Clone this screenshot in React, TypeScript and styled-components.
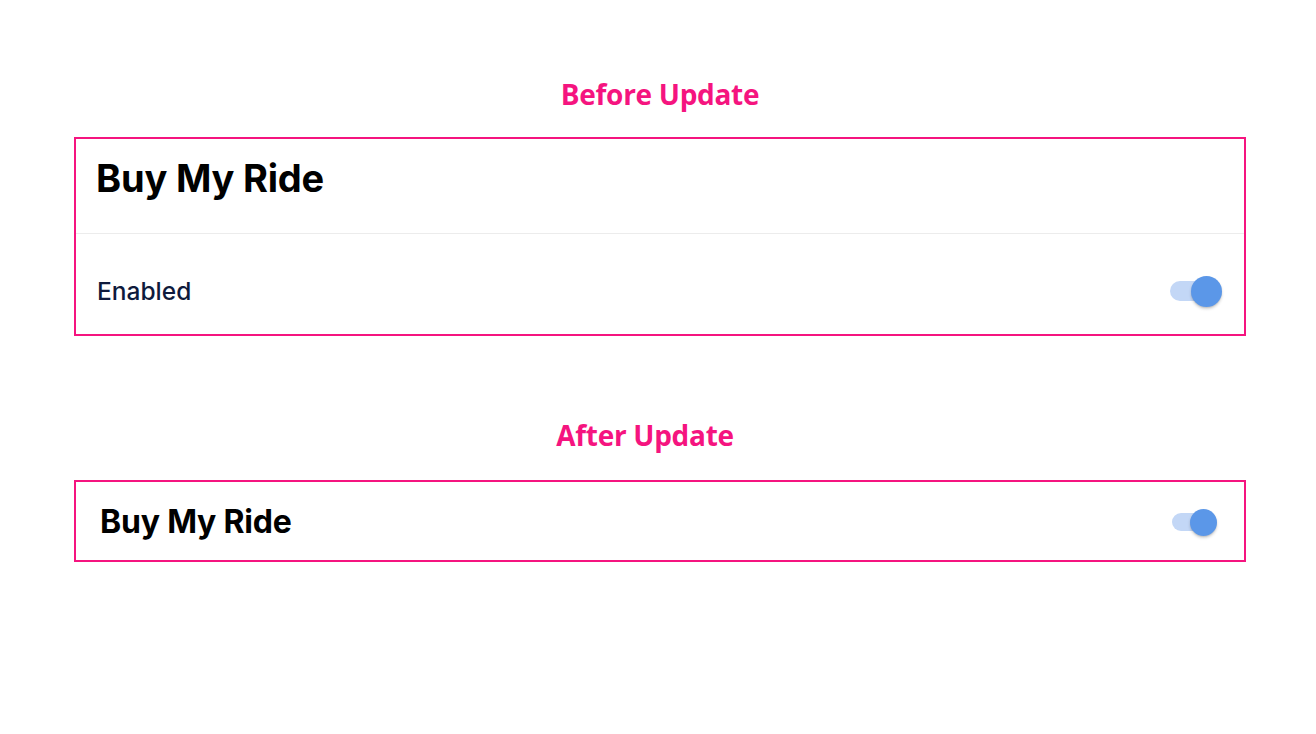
import React from "react";
import styled, { createGlobalStyle } from "styled-components";

const Global = createGlobalStyle`
  html, body { margin: 0; padding: 0; background: #ffffff; }
  body { font-family: Inter, "Noto Sans", sans-serif; }
`;

const Page = styled.div`
  width: 1316px;
  min-height: 734px;
  padding: 77px 70px 0 74px;
  box-sizing: border-box;
  display: flex;
  flex-direction: column;
`;

const Heading = styled.h2<{ $shift?: number; $gap: number }>`
  margin: 0 0 ${(p) => p.$gap}px 0;
  padding-right: ${(p) => p.$shift ?? 0}px;
  height: 34px;
  line-height: 34px;
  text-align: center;
  font-family: "Open Sans", Lato, sans-serif;
  font-weight: 700;
  font-size: 28px;
  letter-spacing: -0.3px;
  color: #f5147f;
`;

const Card = styled.section<{ $mb: number }>`
  width: 1172px;
  box-sizing: border-box;
  border: 2px solid #f5147f;
  margin-bottom: ${(p) => p.$mb}px;
  display: flex;
  flex-direction: column;
`;

const CardHeader = styled.div`
  height: 95px;
  box-sizing: border-box;
  padding: 17px 20px 0;
  display: flex;
  align-items: flex-start;
  border-bottom: 1px solid #ececec;
`;

const Title = styled.h1<{ $size: number }>`
  margin: 0;
  font-family: Inter, "Noto Sans", sans-serif;
  font-weight: 700;
  font-size: ${(p) => p.$size}px;
  line-height: 1.2;
  color: #000000;
  letter-spacing: -0.2px;
`;

const Row = styled.div<{ $h: number; $pl: number; $pr: number; $pt?: number }>`
  height: ${(p) => p.$h}px;
  box-sizing: border-box;
  padding: ${(p) => p.$pt ?? 0}px ${(p) => p.$pr}px 0 ${(p) => p.$pl}px;
  display: flex;
  align-items: center;
  justify-content: space-between;
`;

const Label = styled.span`
  font-family: Inter, "Noto Sans", sans-serif;
  font-weight: 500;
  font-size: 24.5px;
  color: #0e1a3c;
`;

const SwitchWrap = styled.div<{ $w: number; $h: number }>`
  position: relative;
  width: ${(p) => p.$w}px;
  height: ${(p) => p.$h}px;
  display: flex;
  align-items: center;
`;

const Track = styled.div<{ $w: number; $h: number }>`
  width: ${(p) => p.$w}px;
  height: ${(p) => p.$h}px;
  border-radius: ${(p) => p.$h / 2}px;
  background: #c3d7f6;
`;

const Thumb = styled.div<{ $d: number }>`
  position: absolute;
  right: 0;
  top: 0;
  width: ${(p) => p.$d}px;
  height: ${(p) => p.$d}px;
  border-radius: 50%;
  background: #5b97e8;
  box-shadow: 0 2px 3px rgba(0, 0, 0, 0.18), 0 1px 1px rgba(0, 0, 0, 0.08);
`;

function Toggle({ track, trackH, d }: { track: number; trackH: number; d: number }) {
  return (
    <SwitchWrap $w={track + d / 2} $h={d}>
      <Track $w={track} $h={trackH} />
      <Thumb $d={d} />
    </SwitchWrap>
  );
}

export default function App() {
  return (
    <>
      <Global />
      <Page>
        <Heading $gap={26}>Before Update</Heading>
        <Card $mb={82}>
          <CardHeader>
            <Title $size={38}>Buy My Ride</Title>
          </CardHeader>
          <Row $h={100} $pl={21} $pr={22} $pt={14}>
            <Label>Enabled</Label>
            <Toggle track={37} trackH={20} d={31} />
          </Row>
        </Card>
        <Heading $gap={28} $shift={30}>After Update</Heading>
        <Card $mb={0}>
          <Row $h={78} $pl={24} $pr={27} $pt={2}>
            <Title $size={32}>Buy My Ride</Title>
            <Toggle track={32} trackH={18} d={27} />
          </Row>
        </Card>
      </Page>
    </>
  );
}
